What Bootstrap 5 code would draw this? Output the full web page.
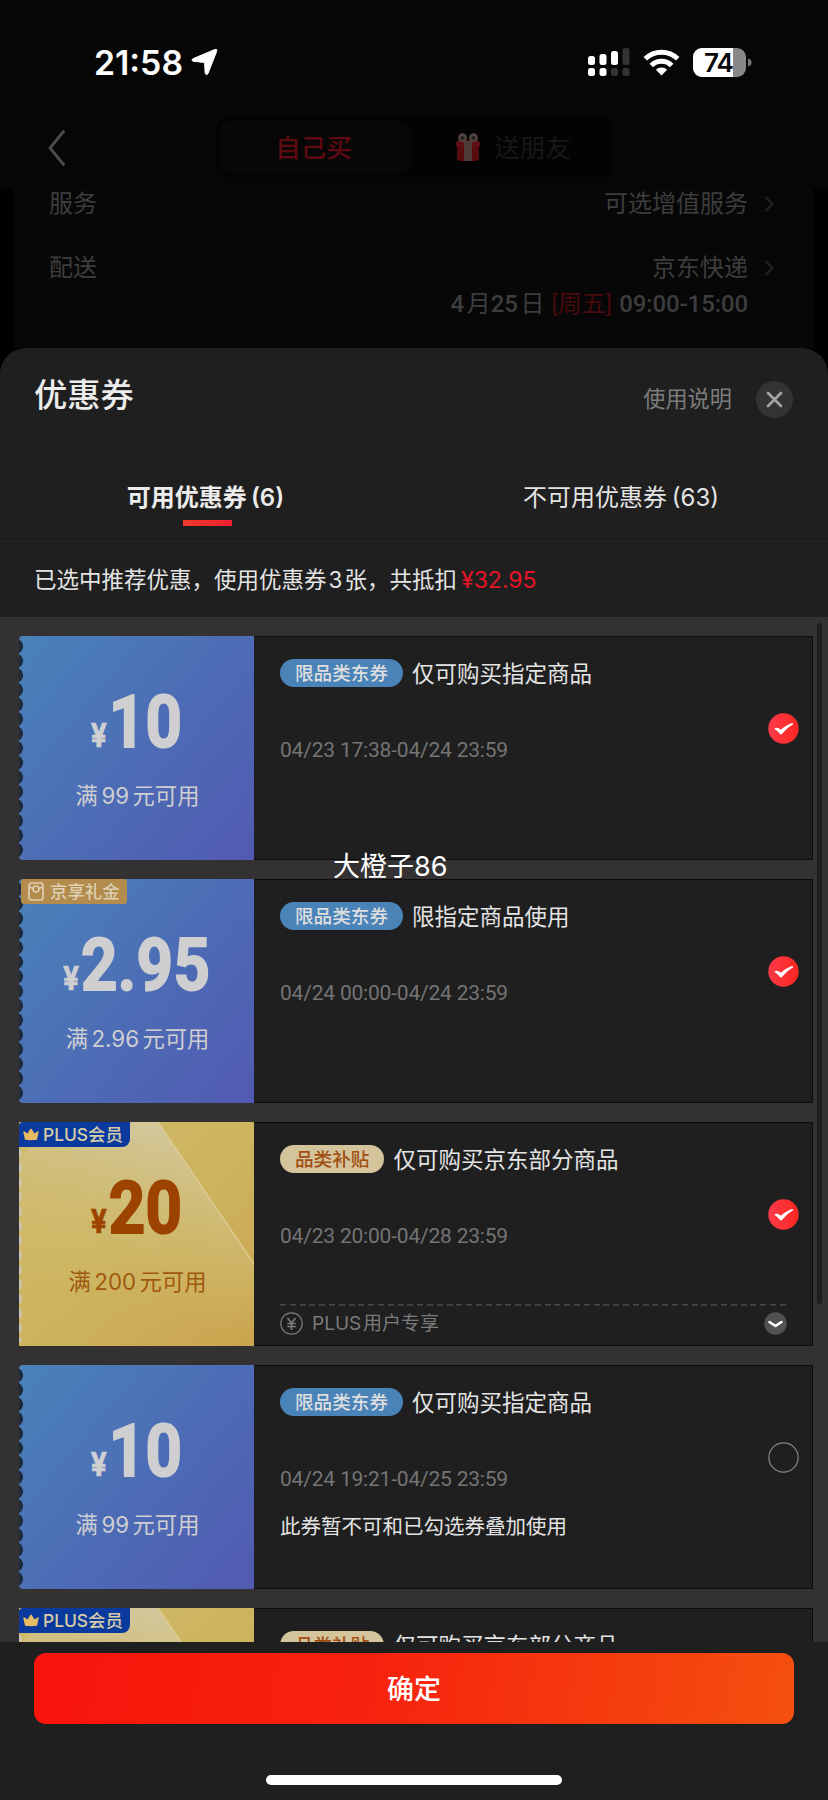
<!DOCTYPE html>
<html lang="zh-CN" data-bs-theme="dark">
<head>
<meta charset="utf-8">
<meta name="viewport" content="width=device-width, initial-scale=1">
<title>优惠券</title>
<link href="https://cdn.jsdelivr.net/npm/bootstrap@5.3.0/dist/css/bootstrap.min.css" rel="stylesheet">
<style>
body{width:828px;height:1800px;overflow:hidden;background:#000;color:#e4e4e4;font-family:Inter,"Noto Sans CJK SC",sans-serif;font-size:22.5px;line-height:1;-webkit-font-smoothing:antialiased}
svg{display:block;flex:none}
.topbar{height:189px;background:#060606}
.status-row{height:118px;padding:6px 76px 0 94px;color:#fff}
.clock{font-size:33.800px;font-weight:600;letter-spacing:0;padding-top:2px}
.nav-row{height:59px}
.seg{width:397px;height:59px;margin-left:152px;background:#030303;border-radius:12px;padding:3px;font-size:25.500px}
.seg-on{width:191px;background:#070707;border-radius:10px;color:#5f0a10;font-weight:500;padding:0 4px 0 0}
.seg-off{color:#17171a}
.order{height:159px;margin:0 14px;padding:0 40px 0 35px;background:#070707;color:#3d3d3d;font-size:24px}
.order .line{height:30px}
.sheet{height:1452px;background:#1f1f1f;border-radius:26px 26px 0 0;overflow:hidden}
.sheet-head{height:102px;padding:0 35px 0 34px}
.sheet-title{font-size:33.300px;font-weight:500;margin-top:-6px;color:#ececec}
.closer{width:37px;height:37px;background:#343334;margin-left:24px}
.tabs-row{height:92px;border-bottom:1px solid #272727;font-size:24px}
.tabs-row>div{padding-top:36px}
.tabs-row .tab-on{font-weight:600;color:#ececec;padding-right:3px}
.tab-on::after{content:"";position:absolute;left:183px;top:70px;width:49px;height:6px;background:linear-gradient(90deg,#f33a2c,#f02030)}
.tabs-row span{margin-left:-2px;letter-spacing:0}
.note{height:75px;padding:1px 0 0 34px;font-size:22.500px}
.note b{font-weight:400;color:#e81428;margin-left:4px;font-size:23px}
.coupons{height:1025px;background:#333132;padding:19px 15px 0 19px;overflow:hidden}
.coupon{height:224px;margin-bottom:19px}
.face{width:235px;background:linear-gradient(130deg,#4982b9 0%,#4d6bb5 55%,#525ab1 100%);color:#cfcfd2;flex:none;border-radius:4px 0 0 4px}
.face::before{content:"";position:absolute;left:0;top:3.2px;width:4px;height:218px;background:radial-gradient(ellipse 4px 6.4px at 0 50%,#1d2b3b 92%,transparent) 0 0/4px 14.55px repeat-y}
.face.gold{background:linear-gradient(140deg,#d0bb69 0%,#cdb45f 50%,#cba44f 100%);color:#9c4300;border-radius:0}
.face.gold::before{background:radial-gradient(ellipse 3.4px 5.4px at 0 50%,#ccc3ad 85%,transparent) 0 0/4px 14.55px repeat-y;top:24px;height:196px;z-index:1}
.beam{position:absolute;left:0;top:0}
.amount{height:53px;margin:60px 0 0 1px;font-family:Roboto,sans-serif;font-weight:700;line-height:53px;transform:scaleX(.87)}
.amount i{font-style:normal;font-family:Inter,sans-serif;font-size:32.500px;line-height:31px;-webkit-text-stroke:.7px currentColor}
.amount span{font-size:73px;margin-left:2px;-webkit-text-stroke:2px currentColor;letter-spacing:.5px}
.cond{margin:35px 0 0 2px;font-size:22.300px;height:24px;line-height:24px;white-space:nowrap}
.cond span{margin:0 3.500px}
.gold .cond{color:#a0580f}
.flag{position:absolute;left:0;top:0;height:25px;font-size:17.4px;font-weight:500;z-index:2}
.flag-gift{left:2px;width:106px;background:#b38b4c;color:#ddd0b3;border-radius:3px;padding-left:7px;gap:6px}
.flag-plus{width:111px;background:#0b3a9f;color:#d6cda6;border-radius:4px 0 8px 0;padding-left:4px;gap:4px}
.info{border:1px solid #0c0c0c;border-left:0;background:#1f1f1f;padding:22px 11px 0 26px}
.info .pill{height:28px;padding:1px 15px 0;border-radius:14px;background:#4a83b7;color:#dedede;font-size:18.6px;font-weight:500;margin-right:9px}
.info .pill.sand{background:#d3c49c;color:#a14e12}
.info .pill+span{padding-top:2px}
.when{margin-top:51px;height:24px;line-height:24px;font-family:Roboto,sans-serif;font-weight:400;font-size:21px;color:#747474;letter-spacing:-.2px}
.pick{position:absolute;right:14px;top:77px}
.why{font-size:20.500px;margin-top:23px;line-height:25px}
.extra{margin:56px 14px 0 0;padding-top:8px;color:#7b7b7b;font-size:19px;background:repeating-linear-gradient(90deg,#464646 0 6px,transparent 6px 9.8px) 0 0/100% 1.6px no-repeat}
.scroller{position:absolute;left:817px;top:623px;width:5px;height:681px;border-radius:3px;background:#1f1e1f}
.floating{position:absolute;left:333px;top:853px;font-size:27px;line-height:28px;color:#fff;white-space:nowrap}
.foot{height:158px;padding:11px 34px 0;background:#1f1f1f}
.foot .ok{height:71px;border:0;border-radius:12px;background:linear-gradient(100deg,#f8140c 0%,#f7230e 45%,#f4500e 100%);color:#fff;font-size:27px;font-weight:500;padding:4px 0 0}
.homebar{width:296px;height:10px;margin-top:51px;background:#fff;border-radius:5px}
</style>
</head>
<body class="position-relative">
<svg width="0" height="0" class="position-absolute">
  <defs>
    <linearGradient id="rd" x1="0" x2="1"><stop offset="0" stop-color="#fd3a4a"/><stop offset="1" stop-color="#fb2720"/></linearGradient>
    <linearGradient id="bm" x1=".5" y1="0" x2=".25" y2="1"><stop offset="0" stop-color="#d3c79a"/><stop offset=".35" stop-color="#d0bd78" stop-opacity=".8"/><stop offset=".8" stop-color="#cfb965" stop-opacity="0"/></linearGradient>
    <symbol id="tick" viewBox="0 0 31 31"><circle cx="15.5" cy="15.5" r="15.2" fill="url(#rd)"/><path d="M6.500 15.400c2-1.600 4.300-.5 6.500 1.400 3.200-3 7-5.300 11-6.700 1.200-.2 1.400 1 .6 1.700-4.500 2.700-7.600 5.600-10.600 9.300-.6.600-1.400.6-2 0-1.600-2-3.400-3.800-5.500-5z" fill="#fff"/></symbol>
    <symbol id="beams" viewBox="0 0 235 224"><path d="M30 0H139L235 142V224H0V40z" fill="url(#bm)"/><path d="M139 0L235 142" stroke="#dccb8d" stroke-width="1.500"/><path d="M62 90L78 66Q86 57 96 66L150 148" stroke="#dcc98a" stroke-opacity=".25" fill="none" stroke-width="1.500"/></symbol>
    <symbol id="crown" viewBox="0 0 16 13"><path d="M2 11.800 .3 3.900Q.3 2.900 1.500 3.500L4.500 5.500 7.300 1q.7-.8 1.400 0l2.800 4.500 3-2q1.200-.6 1.200.4L14 11.800q-6 .8-12 0z" fill="#e6bb62"/></symbol>
    <symbol id="more" viewBox="0 0 10 18"><path d="M1.500 2 8.500 9 1.500 16" fill="none" stroke="#262626" stroke-width="1.800"/></symbol>
  </defs>
</svg>

<header class="topbar">
  <div class="status-row d-flex align-items-center">
    <span class="clock">21:58</span>
    <svg class="ms-2" width="27" height="28" viewBox="0 0 27 28"><path d="M23.800 1.500Q26.500.6 25.700 3.300L17 25.500Q15.700 27.800 14.200 25.500L13.600 15.500Q13.500 14.500 12.500 14.400L2 13.200Q-.2 12.200 1.800 10.800z" fill="#fff" stroke="#fff" stroke-linejoin="round"/></svg>
    <svg class="ms-auto" width="42" height="30" viewBox="0 0 42 30" fill="#fff"><rect x="0" y="9" width="7" height="9" rx="2.500"/><rect x="11.500" y="7" width="7" height="11" rx="2.500"/><rect x="23" y="4" width="7" height="14" rx="2.500"/><rect x="34.500" y="1" width="7" height="17" rx="2.500" fill="#333"/><rect x="0" y="21" width="7" height="8" rx="2.500"/><rect x="11.500" y="21" width="7" height="8" rx="2.500"/><rect x="23" y="21" width="7" height="8" rx="2.500" fill="#333"/><rect x="34.500" y="21" width="7" height="8" rx="2.500" fill="#333"/></svg>
    <svg style="margin-left:13px" width="37" height="28" viewBox="0 0 37 28"><g fill="none" stroke="#fff" stroke-width="5"><path d="M2.300 10.800a23 23 0 0 1 32.400 0"/><path d="M8.300 17.500a14.600 14.600 0 0 1 20.400 0"/></g><path d="M18.500 27.500 12.900 21.700a8 8 0 0 1 11.200 0z" fill="#fff"/></svg>
    <svg style="margin-left:13px" width="59" height="29" viewBox="0 0 59 29"><defs><clipPath id="bat"><rect width="53" height="29" rx="9"/></clipPath></defs><g clip-path="url(#bat)"><rect width="53" height="29" fill="#888"/><rect width="40" height="29" fill="#fff"/></g><path d="M55 10.500q3.500.8 3.500 4t-3.500 4z" fill="#777"/><text x="25.500" y="23.800" text-anchor="middle" font-family="Inter,sans-serif" font-weight="600" font-size="26" letter-spacing="-1" fill="#080808">74</text></svg>
  </div>
  <div class="nav-row d-flex align-items-center">
    <svg style="margin-left:47px" width="18" height="36" viewBox="0 0 18 36"><path d="M16.500 1.500 3 18 16.500 34.500" fill="none" stroke="#4c4c4c" stroke-width="2.800" stroke-linecap="round" stroke-linejoin="round"/></svg>
    <div class="seg d-flex">
      <div class="seg-on d-flex align-items-center justify-content-center">自己买</div>
      <div class="seg-off d-flex align-items-center flex-fill justify-content-center ps-1">
        <svg class="me-2" width="26" height="30" viewBox="0 0 26 30"><path d="M2 8Q2 7 4 7H22Q24 7 24 9V25q0 3-3 3H5q-3 0-3-3z" fill="#560b0e"/><rect x="1" y="8" width="24" height="6" rx="2.500" fill="#5d0e11"/><rect x="9" y="8" width="8" height="20" fill="#4d3a39"/><g fill="#25201d" stroke="#4f423c" stroke-width="2.600"><circle cx="7.500" cy="4.800" r="3.200"/><circle cx="18.500" cy="4.800" r="3.200"/></g></svg>
        <span style="margin-left:5px">送朋友</span>
      </div>
    </div>
  </div>
</header>

<section class="order">
  <div class="line d-flex align-items-center"><span>服务</span><span class="ms-auto me-3">可选增值服务</span><svg width="10" height="18"><use href="#more"/></svg></div>
  <div class="line d-flex align-items-center" style="margin-top:34px"><span>配送</span><span class="ms-auto me-3">京东快递</span><svg width="10" height="18"><use href="#more"/></svg></div>
  <div class="line d-flex align-items-center justify-content-end fw-medium pe-4" style="margin:6px 2px 0 0;font-family:Roboto,'Noto Sans CJK SC',sans-serif"><span>4<span class="fw-normal">&#8202;月</span>25<span class="fw-normal">&#8202;日</span></span><span style="color:#470a0d;margin:0 7px;font-weight:400">[周五]</span><span style="letter-spacing:-.1px">09:00-15:00</span></div>
</section>

<main class="sheet">
  <div class="sheet-head d-flex align-items-center">
    <span class="sheet-title">优惠券</span>
    <span class="ms-auto" style="color:#7c7c7c;font-size:22.200px;padding-top:1px">使用说明</span>
    <span class="closer rounded-circle d-flex align-items-center justify-content-center"><svg width="17" height="17" viewBox="0 0 17 17"><path d="M2 2 15 15M15 2 2 15" stroke="#a3a3a3" stroke-width="2.700" stroke-linecap="round"/></svg></span>
  </div>
  <div class="tabs-row row g-0 text-center position-relative">
    <div class="col-6 tab-on">可用优惠券 <span>(6)</span></div>
    <div class="col-6">不可用优惠券 <span>(63)</span></div>
  </div>
  <div class="note d-flex align-items-center">已选中推荐优惠，使用优惠券&#8202;3&#8202;张，共抵扣<b>¥32.95</b></div>

  <div class="coupons">
    <article class="coupon d-flex position-relative">
      <div class="face position-relative d-flex flex-column align-items-center">
        <div class="amount d-flex align-items-baseline"><i>¥</i><span>10</span></div>
        <div class="cond">满<span>99</span>元可用</div>
      </div>
      <div class="info flex-fill">
        <div class="d-flex align-items-center"><span class="pill d-flex align-items-center">限品类东券</span><span>仅可购买指定商品</span></div>
        <div class="when">04/23 17:38-04/24 23:59</div>
      </div>
      <svg class="pick" width="31" height="31"><use href="#tick"/></svg>
    </article>

    <article class="coupon d-flex position-relative">
      <div class="face position-relative d-flex flex-column align-items-center">
        <div class="flag flag-gift d-flex align-items-center"><svg width="16" height="19" viewBox="0 0 16 19" fill="none" stroke="#ddd0b3" stroke-width="1.700"><rect x="1" y="1" width="14" height="17" rx="2.500"/><path d="M1.500 5 5 6.500M14.500 5 11 6.500"/><circle cx="8" cy="7" r="3"/></svg>京享礼金</div>
        <div class="amount d-flex align-items-baseline"><i>¥</i><span>2.95</span></div>
        <div class="cond">满<span>2.96</span>元可用</div>
      </div>
      <div class="info flex-fill">
        <div class="d-flex align-items-center"><span class="pill d-flex align-items-center">限品类东券</span><span>限指定商品使用</span></div>
        <div class="when">04/24 00:00-04/24 23:59</div>
      </div>
      <svg class="pick" width="31" height="31"><use href="#tick"/></svg>
    </article>

    <article class="coupon d-flex position-relative">
      <div class="face gold position-relative d-flex flex-column align-items-center">
        <svg class="beam" width="235" height="224"><use href="#beams"/></svg>
        <div class="flag flag-plus d-flex align-items-center"><svg width="16" height="13"><use href="#crown"/></svg>PLUS会员</div>
        <div class="amount d-flex align-items-baseline position-relative"><i>¥</i><span>20</span></div>
        <div class="cond position-relative">满<span>200</span>元可用</div>
      </div>
      <div class="info flex-fill">
        <div class="d-flex align-items-center"><span class="pill sand d-flex align-items-center">品类补贴</span><span>仅可购买京东部分商品</span></div>
        <div class="when">04/23 20:00-04/28 23:59</div>
        <div class="extra d-flex align-items-center">
          <svg width="23" height="23" viewBox="0 0 23 23" fill="none" stroke="#7b7b7b"><circle cx="11.500" cy="11.500" r="10.700" stroke-width="1.200"/><path d="M7.500 6 11.500 11 15.500 6M7.300 11.500h8.400M7.300 14.500h8.400M11.500 11v7" stroke-width="1.700"/></svg>
          <span style="margin-left:9px">PLUS&#8202;用户专享</span>
          <svg class="ms-auto" width="23" height="23" viewBox="0 0 23 23"><circle cx="11.500" cy="11.500" r="11.300" fill="#515151"/><path d="M5.500 10 11.500 14 17.500 10" fill="none" stroke="#fff" stroke-width="2.600" stroke-linecap="round" stroke-linejoin="round"/></svg>
        </div>
      </div>
      <svg class="pick" width="31" height="31"><use href="#tick"/></svg>
    </article>

    <article class="coupon d-flex position-relative">
      <div class="face position-relative d-flex flex-column align-items-center">
        <div class="amount d-flex align-items-baseline"><i>¥</i><span>10</span></div>
        <div class="cond">满<span>99</span>元可用</div>
      </div>
      <div class="info flex-fill">
        <div class="d-flex align-items-center"><span class="pill d-flex align-items-center">限品类东券</span><span>仅可购买指定商品</span></div>
        <div class="when">04/24 19:21-04/25 23:59</div>
        <div class="why">此券暂不可和已勾选券叠加使用</div>
      </div>
      <svg class="pick" width="31" height="31" viewBox="0 0 31 31"><circle cx="15.500" cy="15.500" r="14.600" fill="none" stroke="#858585" stroke-width="1.200"/></svg>
    </article>

    <article class="coupon d-flex position-relative">
      <div class="face gold position-relative">
        <svg class="beam" width="235" height="224"><use href="#beams"/></svg>
        <div class="flag flag-plus d-flex align-items-center"><svg width="16" height="13"><use href="#crown"/></svg>PLUS会员</div>
      </div>
      <div class="info flex-fill">
        <div class="d-flex align-items-center"><span class="pill sand d-flex align-items-center">品类补贴</span><span>仅可购买京东部分商品</span></div>
      </div>
    </article>
  </div>

  <footer class="foot">
    <button type="button" class="btn ok w-100">确定</button>
    <div class="homebar mx-auto"></div>
  </footer>
</main>
<div class="scroller"></div>
<div class="floating">大橙子86</div>
<script src="https://cdn.jsdelivr.net/npm/bootstrap@5.3.0/dist/js/bootstrap.bundle.min.js"></script>
</body>
</html>
